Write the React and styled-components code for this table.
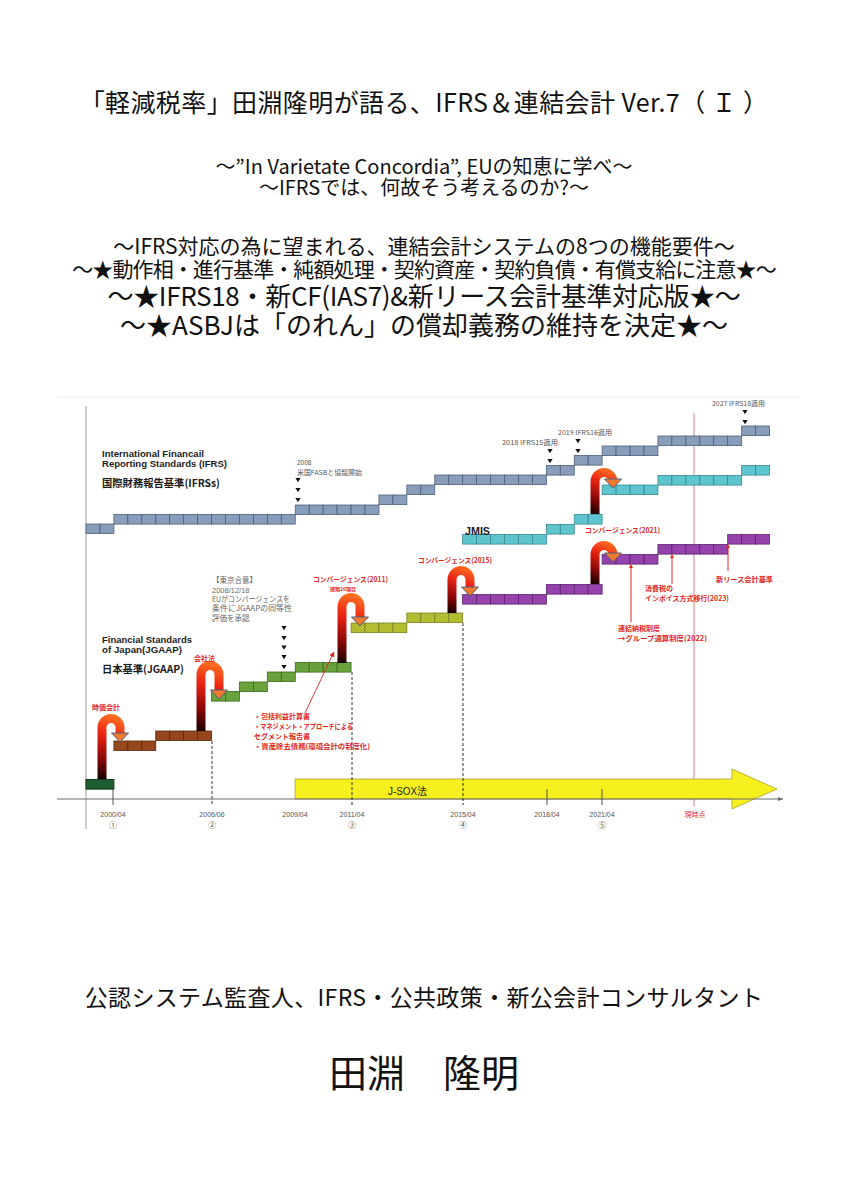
import React from "react";
import styled, { createGlobalStyle } from "styled-components";

const GlobalStyle = createGlobalStyle`
  html, body {
    margin: 0;
    padding: 0;
    background: #fff;
  }
  body {
    font-family: "Noto Sans CJK JP", "Noto Sans", sans-serif;
    color: #111;
  }
`;

const Page = styled.div`
  width: 848px;
  height: 1200px;
  box-sizing: border-box;
  padding-top: 86px;
  display: flex;
  flex-direction: column;
  align-items: center;
`;

const Title = styled.h1`
  margin: 0;
  font-size: 25px;
  line-height: 30px;
  font-weight: 400;
  letter-spacing: 0.4px;
  white-space: nowrap;
`;

const Block = styled.div`
  margin-top: ${(p) => p.$gap}px;
  display: flex;
  flex-direction: column;
  align-items: center;
`;

const Line = styled.div`
  font-size: ${(p) => p.$size}px;
  line-height: ${(p) => p.$lh}px;
  letter-spacing: ${(p) => p.$ls || 0}px;
  white-space: nowrap;
`;

const ChartBox = styled.svg`
  display: block;
  align-self: flex-start;
  margin: 57px 0 0 57px;
  width: 744px;
  height: 444px;
`;

const Author = styled.div`
  margin-top: 142px;
  font-size: 23px;
  line-height: 30px;
  letter-spacing: 0.35px;
  white-space: nowrap;
`;

const Name = styled.div`
  margin-top: 37px;
  font-size: 38px;
  line-height: 46px;
  white-space: nowrap;
`;

const Label = styled.text`
  font-family: ${(p) =>
    p.$latin ? '"Liberation Sans", "Noto Sans CJK JP", sans-serif' : '"Noto Sans CJK JP", sans-serif'};
  font-size: ${(p) => p.$size || 7}px;
  font-weight: ${(p) => (p.$bold ? 700 : 400)};
  fill: ${(p) => p.$color || "#555"};
`;

const CW = 13.95;
const X0 = 86;
const kx = (k) => X0 + CW * k;

const palette = {
  ifrs: ["#8ea3c0", "#50627e"],
  jmis: ["#62ccd6", "#3a8c96"],
  purple: ["#9b45b2", "#5d2570"],
  olive: ["#b8c432", "#7c8522"],
  green: ["#6ca83e", "#3d6c22"],
  brown: ["#9a4a1e", "#5a2a0e"],
  dark: ["#1f5e31", "#123a1d"],
};

const bars = [
  ["ifrs", 0, 2, 528],
  ["ifrs", 2, 15, 518.5],
  ["ifrs", 15, 21, 509],
  ["ifrs", 21, 23, 499],
  ["ifrs", 23, 25, 489],
  ["ifrs", 25, 33, 479],
  ["ifrs", 33, 35, 469.5],
  ["ifrs", 35, 37, 459.5],
  ["ifrs", 37, 41, 450],
  ["ifrs", 41, 47, 440],
  ["ifrs", 47, 49, 430],
  ["jmis", 27, 33, 538.5],
  ["jmis", 33, 35, 528.5],
  ["jmis", 35, 37, 518.5],
  ["jmis", 37, 41, 489],
  ["jmis", 41, 47, 479.5],
  ["jmis", 47, 49, 469.5],
  ["purple", 27, 33, 598.5],
  ["purple", 33, 37, 588.5],
  ["purple", 37, 41, 558.5],
  ["purple", 41, 46, 548.5],
  ["purple", 46, 49, 538.5],
  ["olive", 19, 23, 627],
  ["olive", 23, 27, 617],
  ["green", 9, 11, 695.5],
  ["green", 11, 13, 686],
  ["green", 13, 15, 676],
  ["green", 15, 19, 666.5],
  ["brown", 2, 5, 745],
  ["brown", 5, 9, 735],
];

function Bar({ kind, k0, k1, top }) {
  const [fill, stroke] = palette[kind];
  const cells = [];
  for (let k = k0; k < k1; k++) {
    cells.push(
      <rect key={k} x={kx(k)} y={top} width={CW} height={9.6} fill={fill} stroke={stroke} strokeWidth="0.8" />
    );
  }
  return (
    <g>
      {cells}
      <rect x={kx(k0)} y={top} width={CW * (k1 - k0)} height={9.6} fill="url(#hatch)" />
    </g>
  );
}

// U-turn convergence arrow: shaft goes up from one bar, bends over and points down onto the next
function UArrow({ id, x, bottom, top, tip, dx = 18 }) {
  const r = dx / 2;
  const cy = top + 4.5 + r;
  const legEnd = tip - 9;
  const d = `M ${x} ${bottom} L ${x} ${cy} A ${r} ${r} 0 0 1 ${x + dx} ${cy} L ${x + dx} ${legEnd}`;
  return (
    <g>
      <linearGradient id={id} gradientUnits="userSpaceOnUse" x1={x} y1={bottom} x2={x + dx} y2={top}>
        <stop offset="0" stopColor="#1c0000" />
        <stop offset="0.3" stopColor="#8c0808" />
        <stop offset="0.65" stopColor="#ec2414" />
        <stop offset="1" stopColor="#ff7c24" />
      </linearGradient>
      <path d={d} fill="none" stroke={`url(#${id})`} strokeWidth="9" />
      <polygon
        points={`${x + dx - 8.5},${legEnd} ${x + dx + 8.5},${legEnd} ${x + dx},${tip}`}
        fill="#f27a2e"
        stroke="#4e5f7e"
        strokeWidth="1"
      />
    </g>
  );
}

function Marks({ x, ys }) {
  return ys.map((y) => (
    <polygon key={y} points={`${x - 2.6},${y - 2} ${x + 2.6},${y - 2} ${x},${y + 2.2}`} fill="#111" />
  ));
}

function Pointer({ x, from, to }) {
  return (
    <g>
      <line x1={x} y1={from} x2={x} y2={to + 3} stroke="#e0281e" strokeWidth="1" />
      <polygon points={`${x - 2},${to + 4} ${x + 2},${to + 4} ${x},${to}`} fill="#e0281e" />
    </g>
  );
}

const ticks = [
  { x: 113, date: "2000/04", num: "①" },
  { x: 212, date: "2006/06", num: "②" },
  { x: 295, date: "2009/04" },
  { x: 352, date: "2011/04", num: "③" },
  { x: 463, date: "2015/04", num: "④" },
  { x: 547, date: "2018/04" },
  { x: 602, date: "2021/04", num: "⑤" },
];

function Chart() {
  return (
    <ChartBox viewBox="57 399 744 444">
      <defs>
        <pattern id="hatch" width="3" height="3" patternUnits="userSpaceOnUse">
          <path d="M0 3 L3 0" stroke="rgba(0,0,0,0.18)" strokeWidth="0.6" />
        </pattern>
        <marker id="redhead" markerWidth="6" markerHeight="6" refX="3" refY="3" orient="auto">
          <path d="M0 0 L6 3 L0 6 Z" fill="#e0281e" />
        </marker>
      </defs>

      <line x1="57" y1="401" x2="800" y2="401" stroke="#ececec" />
      <line x1="86" y1="410" x2="86" y2="833" stroke="#9a9a9a" strokeWidth="1" />
      <line x1="694" y1="417" x2="694" y2="810" stroke="#e07a7a" strokeWidth="1" />

      {/* J-SOX */}
      <polygon
        points="295,783 732,783 732,773 777,793 732,813 732,803 295,803"
        fill="#f6f01e"
        stroke="#aaa236"
        strokeWidth="0.8"
      />
      <Label x="388" y="799" $size={10} $latin $color="#222" textLength="39" lengthAdjust="spacingAndGlyphs">
        J-SOX法
      </Label>

      <line x1="57" y1="803" x2="783" y2="803" stroke="#6a6a6a" strokeWidth="1" />
      <polygon points="783,803 778,801 778,805" fill="#6a6a6a" />

      {/* dashed guide lines */}
      <line x1="212" y1="745" x2="212" y2="809" stroke="#333" strokeDasharray="3 2" />
      <line x1="352" y1="676" x2="352" y2="809" stroke="#333" strokeDasharray="3 2" />
      <line x1="463" y1="627" x2="463" y2="809" stroke="#333" strokeDasharray="3 2" />
      <line x1="113" y1="793" x2="113" y2="809" stroke="#555" />
      <line x1="547" y1="793" x2="547" y2="809" stroke="#555" />
      <line x1="602" y1="793" x2="602" y2="809" stroke="#555" />

      {ticks.map((t) => (
        <g key={t.date}>
          <Label x={t.x} y="821" textAnchor="middle" $size={7} $latin $color="#555">
            {t.date}
          </Label>
          {t.num && (
            <Label x={t.x} y="832" textAnchor="middle" $size={8} $color="#555">
              {t.num}
            </Label>
          )}
        </g>
      ))}
      <Label x="695" y="821" textAnchor="middle" $size={7} $color="#e0281e">
        現時点
      </Label>

      {/* bars */}
      {bars.map(([kind, k0, k1, top]) => (
        <Bar key={`${kind}-${k0}`} kind={kind} k0={k0} k1={k1} top={top} />
      ))}
      <rect x={kx(0)} y="783.5" width={CW * 2} height="9.6" fill={palette.dark[0]} stroke={palette.dark[1]} />

      {/* convergence arrows */}
      <UArrow id="ga1" x={102} bottom={783} top={718} tip={746} />
      <UArrow id="ga2" x={201} bottom={735} top={665} tip={703} />
      <UArrow id="ga3" x={342} bottom={667} top={597} tip={630} />
      <UArrow id="ga4" x={452} bottom={617} top={570} tip={600} />
      <UArrow id="ga5" x={595} bottom={588} top={545} tip={566} />
      <UArrow id="ga6" x={595} bottom={518} top={472} tip={492} />

      {/* IFRS labels */}
      <Label x="102" y="461" $size={9.5} $bold $latin $color="#1c1c1c" textLength="102" lengthAdjust="spacingAndGlyphs">
        International Financail
      </Label>
      <Label x="102" y="471" $size={9.5} $bold $latin $color="#1c1c1c" textLength="125" lengthAdjust="spacingAndGlyphs">
        Reporting Standards (IFRS)
      </Label>
      <Label x="102" y="491" $size={10.5} $bold $color="#1c1c1c" textLength="118" lengthAdjust="spacingAndGlyphs">
        国際財務報告基準(IFRSs)
      </Label>

      <Label x="297" y="469" $size={6.5} $latin>2008</Label>
      <Label x="297" y="479" $size={6.5} textLength="65" lengthAdjust="spacingAndGlyphs">
        米国FASBと協議開始
      </Label>
      <Marks x={298} ys={[484, 494, 504]} />

      <Label x="502" y="449" $size={6.5} textLength="56" lengthAdjust="spacingAndGlyphs">
        2018 IFRS15適用
      </Label>
      <Marks x={550} ys={[455, 465]} />
      <Label x="558" y="439" $size={6.5} textLength="54" lengthAdjust="spacingAndGlyphs">
        2019 IFRS16適用
      </Label>
      <Marks x={578} ys={[445, 455]} />
      <Label x="712" y="410" $size={6.5} textLength="53" lengthAdjust="spacingAndGlyphs">
        2027 IFRS18適用
      </Label>
      <Marks x={745} ys={[416, 426]} />

      <Label x="465" y="539" $size={10} $bold $latin $color="#1c1c1c" textLength="25" lengthAdjust="spacingAndGlyphs">
        JMIS
      </Label>

      {/* red convergence labels */}
      <Label x="585" y="537" $size={7} $bold $color="#e0281e" textLength="75" lengthAdjust="spacingAndGlyphs">
        コンバージェンス(2021)
      </Label>
      <Label x="418" y="567" $size={7} $bold $color="#e0281e" textLength="74" lengthAdjust="spacingAndGlyphs">
        コンバージェンス(2015)
      </Label>
      <Label x="313" y="586" $size={7} $bold $color="#e0281e" textLength="75" lengthAdjust="spacingAndGlyphs">
        コンバージェンス(2011)
      </Label>
      <Label x="343" y="595" textAnchor="middle" $size={5} $bold $color="#e0281e">
        短期26項目
      </Label>
      <Label x="194" y="665" $size={7} $bold $color="#e0281e">
        会社法
      </Label>
      <Label x="92" y="714" $size={7} $bold $color="#e0281e">
        時価会計
      </Label>

      {/* Tokyo agreement */}
      <Label x="212" y="587" $size={7.5} $color="#666">【東京合意】</Label>
      <Label x="212" y="596.5" $size={7.5} $latin $color="#666">2008/12/18</Label>
      <Label x="212" y="606" $size={7.5} $color="#666" textLength="78" lengthAdjust="spacingAndGlyphs">
        EUがコンバージェンスを
      </Label>
      <Label x="212" y="615" $size={7.5} $color="#666" textLength="80" lengthAdjust="spacingAndGlyphs">
        条件にJGAAPの同等性
      </Label>
      <Label x="212" y="624.5" $size={7.5} $color="#666">評価を承認</Label>
      <Marks x={284} ys={[632, 642, 651.5, 661, 671]} />

      {/* JGAAP labels */}
      <Label x="102" y="647" $size={9.5} $bold $latin $color="#1c1c1c" textLength="90" lengthAdjust="spacingAndGlyphs">
        Financial Standards
      </Label>
      <Label x="102" y="657" $size={9.5} $bold $latin $color="#1c1c1c" textLength="80" lengthAdjust="spacingAndGlyphs">
        of Japan(JGAAP)
      </Label>
      <Label x="102" y="677" $size={10.5} $bold $color="#1c1c1c" textLength="82" lengthAdjust="spacingAndGlyphs">
        日本基準(JGAAP)
      </Label>

      {/* 2011 items */}
      <line x1="305" y1="717" x2="333" y2="658" stroke="#e0281e" strokeWidth="0.9" markerEnd="url(#redhead)" />
      <Label x="254" y="723" $size={7} $bold $color="#e0281e">・包括利益計算書</Label>
      <Label x="254" y="733" $size={7} $bold $color="#e0281e" textLength="99" lengthAdjust="spacingAndGlyphs">
        ・マネジメント・アプローチによる
      </Label>
      <Label x="254" y="743" $size={7} $bold $color="#e0281e">セグメント報告書</Label>
      <Label x="254" y="753" $size={7} $bold $color="#e0281e" textLength="116" lengthAdjust="spacingAndGlyphs">
        ・資産除去債務(環境会計の制度化)
      </Label>

      {/* purple-area notes */}
      <Pointer x={631} from={626} to={568} />
      <Pointer x={672} from={588} to={558} />
      <Pointer x={728} from={575} to={548} />
      <Label x="645" y="595" $size={7} $bold $color="#e0281e">消費税の</Label>
      <Label x="645" y="605" $size={7} $bold $color="#e0281e" textLength="84" lengthAdjust="spacingAndGlyphs">
        インボイス方式移行(2023)
      </Label>
      <Label x="618" y="635" $size={7} $bold $color="#e0281e">連結納税制度</Label>
      <Label x="618" y="645" $size={7} $bold $color="#e0281e" textLength="89" lengthAdjust="spacingAndGlyphs">
        →グループ通算制度(2022)
      </Label>
      <Label x="716" y="586" $size={7} $bold $color="#e0281e" textLength="57" lengthAdjust="spacingAndGlyphs">
        新リース会計基準
      </Label>
    </ChartBox>
  );
}

export default function App() {
  return (
    <>
      <GlobalStyle />
      <Page>
        <Title>「軽減税率」田淵隆明が語る、IFRS＆連結会計 Ver.7（ Ｉ ）</Title>
        <Block $gap={39}>
          <Line $size={20} $lh={21}>～”In Varietate Concordia”, EUの知恵に学べ～</Line>
          <Line $size={20} $lh={21}>～IFRSでは、何故そう考えるのか?～</Line>
        </Block>
        <Block $gap={37}>
          <Line $size={21} $lh={23}>～IFRS対応の為に望まれる、連結会計システムの8つの機能要件～</Line>
          <Line $size={21} $lh={23} $ls={-0.9}>～★動作相・進行基準・純額処理・契約資産・契約負債・有償支給に注意★～</Line>
          <Line $size={26} $lh={29} $ls={-0.3}>～★IFRS18・新CF(IAS7)&新リース会計基準対応版★～</Line>
          <Line $size={26} $lh={29}>～★ASBJは「のれん」の償却義務の維持を決定★～</Line>
        </Block>
        <Chart />
        <Author>公認システム監査人、IFRS・公共政策・新公会計コンサルタント</Author>
        <Name>田淵　隆明</Name>
      </Page>
    </>
  );
}
